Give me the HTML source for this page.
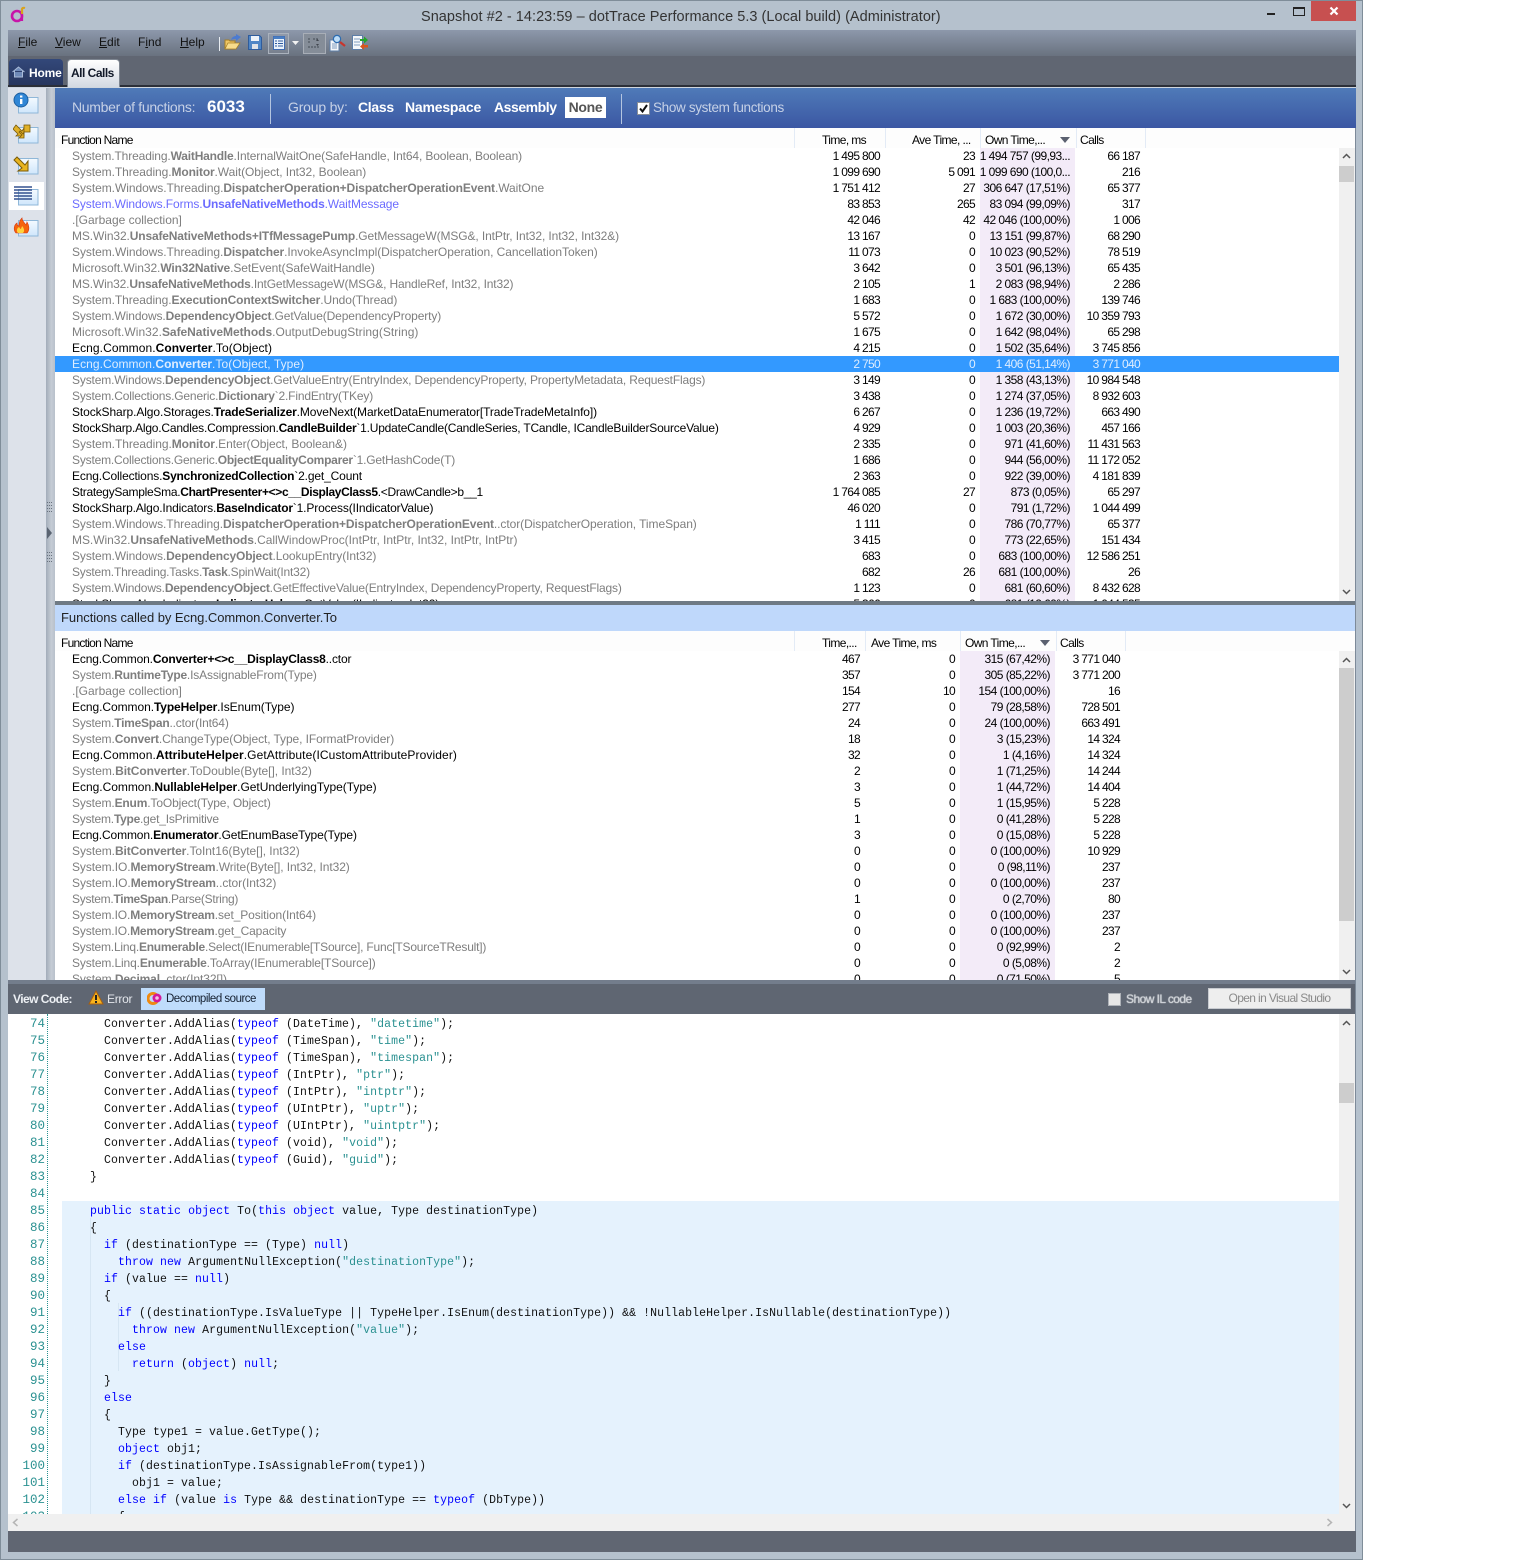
<!DOCTYPE html>
<html lang="en"><head><meta charset="utf-8"><title>dotTrace</title>
<style>
html,body{margin:0;padding:0;background:#fff}
body{position:relative;width:1536px;height:1560px;overflow:hidden;font-family:"Liberation Sans",sans-serif;font-size:12px;color:#000}
.x{position:absolute}
.win{left:0;top:0;width:1363px;height:1560px;background:#b5c1cd;box-sizing:border-box;border:1px solid #7f8d99}
.panel{position:absolute;left:55px;width:1284px;overflow:hidden;background:#fff}
.stripe{position:absolute;top:0;bottom:0;background:#f3ebf8}
.r{position:relative;height:16px;line-height:16px;white-space:nowrap;color:#000}
.r a{position:absolute;left:17px;top:0;letter-spacing:calc(-.2px + var(--l,0px))}
.r a b{letter-spacing:calc(-.27px + var(--l,0px))}
.r i{position:absolute;top:0;font-style:normal;text-align:right;letter-spacing:-.67px;color:#000}
.g a{color:#7e7e7e}.h a{color:#6b6bff}
.s{background:#3399ff}
.r.s a,.r.s i{color:#deedff}
.up i:nth-of-type(1){left:725px;width:100px}
.up i:nth-of-type(2){left:820px;width:100px}
.up i:nth-of-type(3){left:915px;width:100px;letter-spacing:-.55px}
.up i:nth-of-type(4){left:985px;width:100px}
.lo i:nth-of-type(1){left:705px;width:100px}
.lo i:nth-of-type(2){left:800px;width:100px}
.lo i:nth-of-type(3){left:895px;width:100px;letter-spacing:-.55px}
.lo i:nth-of-type(4){left:965px;width:100px}
.up .el{left:916px;letter-spacing:-.54px}
.hd{position:absolute;left:55px;width:1300px;height:20px;background:#fdfdfd;line-height:24px;font-size:12px;letter-spacing:-.6px;white-space:nowrap}
.hd span{position:absolute;top:0}
.hd u{position:absolute;top:0;width:1px;height:20px;background:#e3ebf6}
.sb{position:absolute;left:1339px;width:16px;background:#f0f0f0}
.sb em{position:absolute;left:0;width:15px;background:#cdcdcd}
.sb svg{position:absolute;left:3px}
.m{position:absolute;top:35px;line-height:14px;color:#111;font-size:12px}
.m u{text-decoration:underline}
pre{margin:0;font-family:"Liberation Mono",monospace;font-size:11.5px;letter-spacing:.1px;line-height:17px;color:#111}
.k{color:#0000ff}.t{color:#2b9191}
</style></head><body>
<div class="x win"></div>

<!-- logo + title -->
<svg class="x" style="left:10px;top:6px" width="17" height="17" viewBox="0 0 17 17"><circle cx="7" cy="10" r="5" fill="none" stroke="#c715a8" stroke-width="2.6"/><path d="M12 15V7" stroke="#c715a8" stroke-width="2.2"/><path d="M12 8V3.500c0-1.500 1.500-2 3-1.500" fill="none" stroke="#d9a21c" stroke-width="2.200"/></svg>
<div class="x" style="left:421px;top:8px;width:530px;font-size:14.500px;line-height:18px;color:#333;white-space:nowrap;letter-spacing:.035px">Snapshot #2 - 14:23:59 – dotTrace Performance 5.3 (Local build) (Administrator)</div>
<div class="x" style="left:1267px;top:13px;width:8px;height:2px;background:#222"></div>
<div class="x" style="left:1293px;top:7px;width:10px;box-sizing:content-box;border:1px solid #222;border-top-width:2px;height:6px"></div>
<div class="x" style="left:1311px;top:1px;width:45px;height:20px;background:#c75050"></div>
<svg class="x" style="left:1329px;top:6px" width="10" height="10" viewBox="0 0 10 10"><path d="M1.500 1.500L8.500 8.500M8.500 1.500L1.500 8.500" stroke="#fff" stroke-width="2.200"/></svg>

<!-- client frame -->
<div class="x" style="left:8px;top:30px;width:1348px;height:26px;background:linear-gradient(#8d98ab,#69727f)"></div>
<div class="x" style="left:8px;top:56px;width:1348px;height:29px;background:#606672"></div>
<div class="x" style="left:8px;top:85px;width:1348px;height:3px;background:linear-gradient(#2b2f38,#2b2f38 2px,#cfd6df 2px)"></div>

<div class="m" style="left:18px"><u>F</u>ile</div>
<div class="m" style="left:55px"><u>V</u>iew</div>
<div class="m" style="left:99px"><u>E</u>dit</div>
<div class="m" style="left:138px">F<u>i</u>nd</div>
<div class="m" style="left:180px"><u>H</u>elp</div>
<div class="x" style="left:219px;top:37px;width:1px;height:14px;background:#e9edf2"></div>

<!-- toolbar icons -->
<svg class="x" style="left:224px;top:34px" width="17" height="17" viewBox="0 0 17 17"><path d="M1 15V6h4l1 1h5v8z" fill="#eec664" stroke="#a67f26"/><path d="M1 15l3-6h12l-4 6z" fill="#f7dc8c" stroke="#a67f26" stroke-width=".7"/><path d="M7 6c1-3 3-4 5-4V0l5 3-5 4V5c-2 0-3 0-5 1z" fill="#4c7bd0"/></svg>
<svg class="x" style="left:248px;top:35px" width="14" height="15" viewBox="0 0 14 15"><path d="M.5 .5h11l2 2v12H.5z" fill="#4f86c6" stroke="#2f5c9c"/><rect x="3" y="1" width="8" height="5" fill="#eef3f9"/><rect x="4" y="9" width="6" height="5" fill="#dfe3e8"/></svg>
<div class="x" style="left:268px;top:33px;width:19px;height:19px;border:1px solid #aab2bd;background:rgba(255,255,255,.08)"></div>
<svg class="x" style="left:273px;top:36px" width="12" height="14" viewBox="0 0 12 14"><rect x=".5" y=".5" width="11" height="13" fill="#eaf2fb" stroke="#3e6ab0"/><rect x=".5" y=".5" width="11" height="2.500" fill="#4a7fc4"/><path d="M2 5h2M2 7.500h2M2 10h2M5 5h5M5 7.500h5M5 10h5" stroke="#2d5a9f"/></svg>
<svg class="x" style="left:292px;top:41px" width="7" height="4"><path d="M0 0h7L3.500 4z" fill="#f2f2f2"/></svg>
<div class="x" style="left:303px;top:33px;width:21px;height:19px;border:1px solid #a8aeb7;background:#858d98"></div>
<svg class="x" style="left:306px;top:36px" width="16" height="14" viewBox="0 0 16 14"><path d="M2 3h3M7 3h6M2 6h3M2 11h12" stroke="#5a616b" stroke-width="1.500" stroke-dasharray="2 1"/><path d="M10 5h3l-1.500-2zM10 8h3l-1.500 2z" fill="#41464e"/></svg>
<svg class="x" style="left:329px;top:34px" width="17" height="18" viewBox="0 0 17 18"><path d="M1 6h9v11H1z" fill="#f4f6f9" stroke="#5d7ea8"/><path d="M3 10h5M3 12h5M3 14h5" stroke="#7e9cc0"/><circle cx="8" cy="5" r="3.600" fill="#bcdcf7" stroke="#2c6cb0" stroke-width="1.200"/><path d="M11 8l5 4" stroke="#c8342c" stroke-width="2.200"/></svg>
<svg class="x" style="left:352px;top:35px" width="17" height="17" viewBox="0 0 17 17"><rect x=".5" y=".5" width="10" height="14" fill="#f5f7fa" stroke="#5d7ea8"/><path d="M2 4h6M2 7h6M2 10h6" stroke="#7e9cc0"/><path d="M8 4h4V1.500L16 5l-4 3.500V6H8z" fill="#23a52b"/><path d="M16 10h-4V8l-4 3.500 4 3.500v-2.500h4z" fill="#d9561c"/></svg>

<!-- tabs -->
<div class="x" style="left:9px;top:59px;width:54px;height:26px;background:linear-gradient(#33487a,#27365e);border-radius:4px 4px 0 0"></div>
<svg class="x" style="left:12px;top:66px" width="13" height="12" viewBox="0 0 13 12"><path d="M.5 6l6-5 6 5M2.500 5v6h8V5" fill="#6f8ab8" stroke="#a9bbd8"/></svg>
<div class="x" style="left:29px;top:66px;font-weight:bold;color:#fff;font-size:12px;line-height:14px;letter-spacing:-.2px">Home</div>
<div class="x" style="left:67px;top:59px;width:53px;height:28px;background:linear-gradient(#fff,#d3d9e2);border-radius:4px 4px 0 0;border:1px solid #7e8691;border-bottom:0;box-sizing:border-box"></div>
<div class="x" style="left:71px;top:66px;font-weight:bold;color:#101828;font-size:12px;line-height:14px;letter-spacing:-.5px;white-space:nowrap">All Calls</div>

<!-- sidebar -->
<div class="x" style="left:8px;top:88px;width:38px;height:892px;background:#dde2ea"></div>
<div class="x" style="left:46px;top:88px;width:9px;height:892px;background:linear-gradient(90deg,#a2acb9,#c5ccd5 60%,#b8c0cb)"></div>
<div class="x" style="left:9px;top:182px;width:35px;height:28px;background:#fff"></div>
<svg class="x" style="left:13px;top:92px" width="28" height="150" viewBox="0 0 28 150">
<defs><linearGradient id="wg" x1="0" y1="0" x2="0" y2="1"><stop offset="0" stop-color="#f4faff"/><stop offset="1" stop-color="#cfe6fb"/></linearGradient></defs>
<g fill="url(#wg)" stroke="#8fb7d8"><rect x="5.500" y="5.500" width="19.500" height="15.500"/><rect x="5.500" y="35.500" width="19.500" height="15.500"/><rect x="5.500" y="66.500" width="19.500" height="15.500"/><rect x="5.500" y="97.500" width="19.500" height="15.500"/><rect x="5.500" y="128.500" width="19.500" height="15.500"/></g>
<circle cx="8" cy="8" r="7" fill="#2f86d6" stroke="#1d5f9f"/><rect x="7" y="7" width="2.400" height="5" fill="#fff"/><rect x="7" y="3.500" width="2.400" height="2" fill="#fff"/>
<g fill="#e0b028" stroke="#7a5a08" stroke-width=".8"><path transform="translate(0,33)" d="M3 0l6 6 2-3v8H3l2-2-5-5z"/><rect x="11" y="33" width="6" height="7"/><path transform="translate(6,39)" d="M0 1l1-1 3 3 1-2v6H0l1-1 2-2z"/></g>
<path d="M4 65L12 73L15 69V79H5L9 76L1 68z" fill="#e8b41f" stroke="#7a5a08"/>
<path d="M1 95h18M1 98h18M1 101h18M1 104h18M1 107h18" stroke="#33518f" stroke-width="1.500"/>
<path d="M3 141c-3-3-2-8 1-10 0 2 1 3 2 3 0-4 1-6 3-8 0 3 2 4 4 7 0-1 1-2 1-3 2 3 3 8 0 11z" fill="#f5640c" stroke="#d8360a" stroke-width=".6"/><path d="M5 141c-2-2-1-5 1-6 1 1 1 2 2 2 0-1 1-2 1-3 2 2 3 5 1 7z" fill="#ffd23c"/>
</svg>
<svg class="x" style="left:46px;top:500px" width="9" height="70" viewBox="0 0 9 70">
<g fill="#68717d"><rect x="1" y="2" width="1" height="1"/><rect x="3" y="2" width="1" height="1"/><rect x="5" y="2" width="1" height="1"/><rect x="1" y="5" width="1" height="1"/><rect x="3" y="5" width="1" height="1"/><rect x="5" y="5" width="1" height="1"/><rect x="1" y="8" width="1" height="1"/><rect x="3" y="8" width="1" height="1"/><rect x="5" y="8" width="1" height="1"/><rect x="1" y="11" width="1" height="1"/><rect x="3" y="11" width="1" height="1"/><rect x="5" y="11" width="1" height="1"/><rect x="1" y="52" width="1" height="1"/><rect x="3" y="52" width="1" height="1"/><rect x="5" y="52" width="1" height="1"/><rect x="1" y="55" width="1" height="1"/><rect x="3" y="55" width="1" height="1"/><rect x="5" y="55" width="1" height="1"/><rect x="1" y="58" width="1" height="1"/><rect x="3" y="58" width="1" height="1"/><rect x="5" y="58" width="1" height="1"/><rect x="1" y="61" width="1" height="1"/><rect x="3" y="61" width="1" height="1"/><rect x="5" y="61" width="1" height="1"/></g>
<path d="M1 27l5 6-5 6z" fill="#5a6472"/></svg>

<!-- blue filter header -->
<div class="x" style="left:55px;top:88px;width:1301px;height:40px;background:linear-gradient(#4f7ab8,#3b57a3)"></div>
<div class="x" style="left:72px;top:99px;color:#c6d1e6;font-size:14px;line-height:17px;white-space:nowrap;letter-spacing:-.3px">Number of functions:</div>
<div class="x" style="left:207px;top:97px;color:#fff;font-size:17px;font-weight:bold;line-height:20px">6033</div>
<div class="x" style="left:270px;top:94px;width:1px;height:30px;background:#b4c5e0"></div>
<div class="x" style="left:288px;top:99px;color:#c6d1e6;font-size:14px;line-height:17px;letter-spacing:-.2px">Group by:</div>
<div class="x" style="left:358px;top:99px;color:#fff;font-size:14px;font-weight:bold;line-height:17px;letter-spacing:-.3px">Class</div>
<div class="x" style="left:405px;top:99px;color:#fff;font-size:14px;font-weight:bold;line-height:17px;letter-spacing:-.2px">Namespace</div>
<div class="x" style="left:494px;top:99px;color:#fff;font-size:14px;font-weight:bold;line-height:17px;letter-spacing:-.45px">Assembly</div>
<div class="x" style="left:565px;top:97px;width:41px;height:21px;background:#fff;color:#555;font-size:14px;font-weight:bold;line-height:21px;text-align:center;letter-spacing:-.3px">None</div>
<div class="x" style="left:621px;top:94px;width:1px;height:30px;background:#b4c5e0"></div>
<div class="x" style="left:637px;top:102px;width:11px;height:11px;background:#fff;border:1px solid #8a8f96"></div>
<svg class="x" style="left:638px;top:103px" width="11" height="11" viewBox="0 0 11 11"><path d="M2 5.500l2.500 3L9 2" fill="none" stroke="#111" stroke-width="2"/></svg>
<div class="x" style="left:653px;top:99px;color:#c6d1e6;font-size:13.500px;line-height:17px;white-space:nowrap;letter-spacing:-.34px">Show system functions</div>

<!-- upper table -->
<div class="hd" style="top:128px"><span style="left:6px;letter-spacing:-.75px">Function Name</span><u style="left:739px"></u><span style="left:767px">Time, ms</span><u style="left:830px"></u><span style="left:857px">Ave Time, ...</span><u style="left:925px"></u><span style="left:930px">Own Time,...</span><svg style="position:absolute;left:1005px;top:9px" width="10" height="6"><path d="M0 0h10L5 6z" fill="#5b6170"/></svg><u style="left:1021px"></u><span style="left:1025px">Calls</span><u style="left:1090px"></u></div>
<div class="panel up" style="top:148px;height:453px">
<div class="stripe" style="left:925px;width:95px"></div>
<div class="r g"><a style="--l:.075px">System.Threading.<b>WaitHandle</b>.InternalWaitOne(SafeHandle, Int64, Boolean, Boolean)</a><i>1 495 800</i><i>23</i><i class="el">1 494 757 (99,93...</i><i>66 187</i></div>
<div class="r g"><a style="--l:.13px">System.Threading.<b>Monitor</b>.Wait(Object, Int32, Boolean)</a><i>1 099 690</i><i>5 091</i><i class="el">1 099 690 (100,0...</i><i>216</i></div>
<div class="r g"><a style="--l:.145px">System.Windows.Threading.<b>DispatcherOperation+DispatcherOperationEvent</b>.WaitOne</a><i>1 751 412</i><i>27</i><i>306 647 (17,51%)</i><i>65 377</i></div>
<div class="r h"><a style="--l:.096px">System.Windows.Forms.<b>UnsafeNativeMethods</b>.WaitMessage</a><i>83 853</i><i>265</i><i>83 094 (99,09%)</i><i>317</i></div>
<div class="r g"><a style="--l:.19px">.[Garbage collection]</a><i>42 046</i><i>42</i><i>42 046 (100,00%)</i><i>1 006</i></div>
<div class="r g"><a style="--l:.1px">MS.Win32.<b>UnsafeNativeMethods+ITfMessagePump</b>.GetMessageW(MSG&amp;, IntPtr, Int32, Int32, Int32&amp;)</a><i>13 167</i><i>0</i><i>13 151 (99,87%)</i><i>68 290</i></div>
<div class="r g"><a style="--l:.143px">System.Windows.Threading.<b>Dispatcher</b>.InvokeAsyncImpl(DispatcherOperation, CancellationToken)</a><i>11 073</i><i>0</i><i>10 023 (90,52%)</i><i>78 519</i></div>
<div class="r g"><a style="--l:.135px">Microsoft.Win32.<b>Win32Native</b>.SetEvent(SafeWaitHandle)</a><i>3 642</i><i>0</i><i>3 501 (96,13%)</i><i>65 435</i></div>
<div class="r g"><a style="--l:.054px">MS.Win32.<b>UnsafeNativeMethods</b>.IntGetMessageW(MSG&amp;, HandleRef, Int32, Int32)</a><i>2 105</i><i>1</i><i>2 083 (98,94%)</i><i>2 286</i></div>
<div class="r g"><a style="--l:.13px">System.Threading.<b>ExecutionContextSwitcher</b>.Undo(Thread)</a><i>1 683</i><i>0</i><i>1 683 (100,00%)</i><i>139 746</i></div>
<div class="r g"><a style="--l:.083px">System.Windows.<b>DependencyObject</b>.GetValue(DependencyProperty)</a><i>5 572</i><i>0</i><i>1 672 (30,00%)</i><i>10 359 793</i></div>
<div class="r g"><a style="--l:.237px">Microsoft.Win32.<b>SafeNativeMethods</b>.OutputDebugString(String)</a><i>1 675</i><i>0</i><i>1 642 (98,04%)</i><i>65 298</i></div>
<div class="r"><a style="--l:.28px">Ecng.Common.<b>Converter</b>.To(Object)</a><i>4 215</i><i>0</i><i>1 502 (35,64%)</i><i>3 745 856</i></div>
<div class="r s"><a style="--l:.26px">Ecng.Common.<b>Converter</b>.To(Object, Type)</a><i>2 750</i><i>0</i><i>1 406 (51,14%)</i><i>3 771 040</i></div>
<div class="r g"><a style="--l:.046px">System.Windows.<b>DependencyObject</b>.GetValueEntry(EntryIndex, DependencyProperty, PropertyMetadata, RequestFlags)</a><i>3 149</i><i>0</i><i>1 358 (43,13%)</i><i>10 984 548</i></div>
<div class="r g"><a style="--l:.036px">System.Collections.Generic.<b>Dictionary</b>`2.FindEntry(TKey)</a><i>3 438</i><i>0</i><i>1 274 (37,05%)</i><i>8 932 603</i></div>
<div class="r"><a style="--l:.105px">StockSharp.Algo.Storages.<b>TradeSerializer</b>.MoveNext(MarketDataEnumerator[TradeTradeMetaInfo])</a><i>6 267</i><i>0</i><i>1 236 (19,72%)</i><i>663 490</i></div>
<div class="r"><a style="--l:-.008px">StockSharp.Algo.Candles.Compression.<b>CandleBuilder</b>`1.UpdateCandle(CandleSeries, TCandle, ICandleBuilderSourceValue)</a><i>4 929</i><i>0</i><i>1 003 (20,36%)</i><i>457 166</i></div>
<div class="r g"><a style="--l:.143px">System.Threading.<b>Monitor</b>.Enter(Object, Boolean&amp;)</a><i>2 335</i><i>0</i><i>971 (41,60%)</i><i>11 431 563</i></div>
<div class="r g"><a style="--l:.015px">System.Collections.Generic.<b>ObjectEqualityComparer</b>`1.GetHashCode(T)</a><i>1 686</i><i>0</i><i>944 (56,00%)</i><i>11 172 052</i></div>
<div class="r"><a style="--l:.057px">Ecng.Collections.<b>SynchronizedCollection</b>`2.get_Count</a><i>2 363</i><i>0</i><i>922 (39,00%)</i><i>4 181 839</i></div>
<div class="r"><a style="--l:-.085px">StrategySampleSma.<b>ChartPresenter+&lt;&gt;c__DisplayClass5</b>.&lt;DrawCandle&gt;b__1</a><i>1 764 085</i><i>27</i><i>873 (0,05%)</i><i>65 297</i></div>
<div class="r"><a style="--l:.056px">StockSharp.Algo.Indicators.<b>BaseIndicator</b>`1.Process(IIndicatorValue)</a><i>46 020</i><i>0</i><i>791 (1,72%)</i><i>1 044 499</i></div>
<div class="r g"><a style="--l:.13px">System.Windows.Threading.<b>DispatcherOperation+DispatcherOperationEvent</b>..ctor(DispatcherOperation, TimeSpan)</a><i>1 111</i><i>0</i><i>786 (70,77%)</i><i>65 377</i></div>
<div class="r g"><a style="--l:.167px">MS.Win32.<b>UnsafeNativeMethods</b>.CallWindowProc(IntPtr, IntPtr, Int32, IntPtr, IntPtr)</a><i>3 415</i><i>0</i><i>773 (22,65%)</i><i>151 434</i></div>
<div class="r g"><a style="--l:.12px">System.Windows.<b>DependencyObject</b>.LookupEntry(Int32)</a><i>683</i><i>0</i><i>683 (100,00%)</i><i>12 586 251</i></div>
<div class="r g"><a>System.Threading.Tasks.<b>Task</b>.SpinWait(Int32)</a><i>682</i><i>26</i><i>681 (100,00%)</i><i>26</i></div>
<div class="r g"><a style="--l:.03px">System.Windows.<b>DependencyObject</b>.GetEffectiveValue(EntryIndex, DependencyProperty, RequestFlags)</a><i>1 123</i><i>0</i><i>681 (60,60%)</i><i>8 432 628</i></div>
<div class="r"><a style="--l:.05px">StockSharp.Algo.Indicators.<b>IndicatorHelper</b>.GetValue(IIndicator, Int32)</a><i>5 366</i><i>0</i><i>681 (12,69%)</i><i>1 044 535</i></div>
</div>
<div class="sb" style="top:148px;height:453px"><em style="top:18px;height:16px"></em><svg style="top:5px" width="9" height="6"><path d="M1 5l3.500-3.500L8 5" fill="none" stroke="#555" stroke-width="1.500"/></svg><svg style="top:441px" width="9" height="6"><path d="M1 1l3.500 3.500L8 1" fill="none" stroke="#555" stroke-width="1.500"/></svg></div>

<!-- divider + title band -->
<div class="x" style="left:55px;top:601px;width:1301px;height:4px;background:#6f7a84"></div>
<div class="x" style="left:55px;top:605px;width:1300px;height:26px;background:#bfd8fb"></div>
<div class="x" style="left:61px;top:610px;font-size:13px;line-height:16px;color:#222;white-space:nowrap;letter-spacing:-.05px">Functions called by Ecng.Common.Converter.To</div>

<!-- lower table -->
<div class="hd" style="top:631px"><span style="left:6px;letter-spacing:-.75px">Function Name</span><u style="left:739px"></u><span style="left:767px">Time,...</span><u style="left:810px"></u><span style="left:816px">Ave Time, ms</span><u style="left:905px"></u><span style="left:910px">Own Time,...</span><svg style="position:absolute;left:985px;top:9px" width="10" height="6"><path d="M0 0h10L5 6z" fill="#5b6170"/></svg><u style="left:1001px"></u><span style="left:1005px">Calls</span><u style="left:1070px"></u></div>
<div class="panel lo" style="top:651px;height:329px">
<div class="stripe" style="left:905px;width:95px"></div>
<div class="r"><a style="--l:.043px">Ecng.Common.<b>Converter+&lt;&gt;c__DisplayClass8</b>..ctor</a><i>467</i><i>0</i><i>315 (67,42%)</i><i>3 771 040</i></div>
<div class="r g"><a style="--l:.045px">System.<b>RuntimeType</b>.IsAssignableFrom(Type)</a><i>357</i><i>0</i><i>305 (85,22%)</i><i>3 771 200</i></div>
<div class="r g"><a style="--l:.19px">.[Garbage collection]</a><i>154</i><i>10</i><i>154 (100,00%)</i><i>16</i></div>
<div class="r"><a style="--l:.14px">Ecng.Common.<b>TypeHelper</b>.IsEnum(Type)</a><i>277</i><i>0</i><i>79 (28,58%)</i><i>728 501</i></div>
<div class="r g"><a style="--l:.035px">System.<b>TimeSpan</b>..ctor(Int64)</a><i>24</i><i>0</i><i>24 (100,00%)</i><i>663 491</i></div>
<div class="r g"><a style="--l:.105px">System.<b>Convert</b>.ChangeType(Object, Type, IFormatProvider)</a><i>18</i><i>0</i><i>3 (15,23%)</i><i>14 324</i></div>
<div class="r"><a style="--l:.3px">Ecng.Common.<b>AttributeHelper</b>.GetAttribute(ICustomAttributeProvider)</a><i>32</i><i>0</i><i>1 (4,16%)</i><i>14 324</i></div>
<div class="r g"><a style="--l:.167px">System.<b>BitConverter</b>.ToDouble(Byte[], Int32)</a><i>2</i><i>0</i><i>1 (71,25%)</i><i>14 244</i></div>
<div class="r"><a style="--l:.176px">Ecng.Common.<b>NullableHelper</b>.GetUnderlyingType(Type)</a><i>3</i><i>0</i><i>1 (44,72%)</i><i>14 404</i></div>
<div class="r g"><a style="--l:.09px">System.<b>Enum</b>.ToObject(Type, Object)</a><i>5</i><i>0</i><i>1 (15,95%)</i><i>5 228</i></div>
<div class="r g"><a>System.<b>Type</b>.get_IsPrimitive</a><i>1</i><i>0</i><i>0 (41,28%)</i><i>5 228</i></div>
<div class="r"><a style="--l:.065px">Ecng.Common.<b>Enumerator</b>.GetEnumBaseType(Type)</a><i>3</i><i>0</i><i>0 (15,08%)</i><i>5 228</i></div>
<div class="r g"><a style="--l:.146px">System.<b>BitConverter</b>.ToInt16(Byte[], Int32)</a><i>0</i><i>0</i><i>0 (100,00%)</i><i>10 929</i></div>
<div class="r g"><a style="--l:.12px">System.IO.<b>MemoryStream</b>.Write(Byte[], Int32, Int32)</a><i>0</i><i>0</i><i>0 (98,11%)</i><i>237</i></div>
<div class="r g"><a style="--l:.135px">System.IO.<b>MemoryStream</b>..ctor(Int32)</a><i>0</i><i>0</i><i>0 (100,00%)</i><i>237</i></div>
<div class="r g"><a style="--l:-.07px">System.<b>TimeSpan</b>.Parse(String)</a><i>1</i><i>0</i><i>0 (2,70%)</i><i>80</i></div>
<div class="r g"><a style="--l:.09px">System.IO.<b>MemoryStream</b>.set_Position(Int64)</a><i>0</i><i>0</i><i>0 (100,00%)</i><i>237</i></div>
<div class="r g"><a style="--l:.077px">System.IO.<b>MemoryStream</b>.get_Capacity</a><i>0</i><i>0</i><i>0 (100,00%)</i><i>237</i></div>
<div class="r g"><a>System.Linq.<b>Enumerable</b>.Select(IEnumerable[TSource], Func[TSourceTResult])</a><i>0</i><i>0</i><i>0 (92,99%)</i><i>2</i></div>
<div class="r g"><a style="--l:.075px">System.Linq.<b>Enumerable</b>.ToArray(IEnumerable[TSource])</a><i>0</i><i>0</i><i>0 (5,08%)</i><i>2</i></div>
<div class="r g"><a style="--l:.13px">System.<b>Decimal</b>..ctor(Int32[])</a><i>0</i><i>0</i><i>0 (71,50%)</i><i>5</i></div>
</div>
<div class="sb" style="top:651px;height:329px"><em style="top:17px;height:253px"></em><svg style="top:6px" width="9" height="6"><path d="M1 5l3.500-3.500L8 5" fill="none" stroke="#555" stroke-width="1.500"/></svg><svg style="top:318px" width="9" height="6"><path d="M1 1l3.500 3.500L8 1" fill="none" stroke="#555" stroke-width="1.500"/></svg></div>

<!-- view code bar -->
<div class="x" style="left:8px;top:980px;width:1348px;height:4px;background:#737d8c"></div>
<div class="x" style="left:8px;top:984px;width:1348px;height:30px;background:#5f6672"></div>
<div class="x" style="left:13px;top:992px;font-weight:bold;color:#edf0f4;line-height:14px;font-size:12px;letter-spacing:-.55px;white-space:nowrap">View Code:</div>
<svg class="x" style="left:88px;top:990px" width="16" height="15" viewBox="0 0 16 15"><path d="M8 1l7 13H1z" fill="#f7b21c" stroke="#a65f10"/><rect x="7" y="5" width="2" height="5" fill="#222"/><rect x="7" y="11" width="2" height="2" fill="#222"/></svg>
<div class="x" style="left:107px;top:992px;color:#e4e7ec;line-height:14px;font-size:12px;letter-spacing:-.3px">Error</div>
<div class="x" style="left:141px;top:988px;width:124px;height:22px;background:#bfdcfb"></div>
<svg class="x" style="left:147px;top:991px" width="16" height="15" viewBox="0 0 16 15"><circle cx="6" cy="7.500" r="5" fill="none" stroke="#ee8a12" stroke-width="3"/><circle cx="10" cy="7" r="4.500" fill="#d4189a"/><circle cx="10" cy="7" r="1.800" fill="#f2c2e2"/></svg>
<div class="x" style="left:166px;top:992px;color:#152030;line-height:14px;font-size:11.500px;white-space:nowrap;letter-spacing:-.5px">Decompiled source</div>
<div class="x" style="left:1108px;top:993px;width:11px;height:11px;background:#e6e6e6;border:1px solid #aeb2b8"></div>
<div class="x" style="left:1126px;top:992px;color:#cfd3d8;line-height:14px;font-size:12px;white-space:nowrap;letter-spacing:-.55px;text-shadow:0 0 1px #fff">Show IL code</div>
<div class="x" style="left:1208px;top:988px;width:141px;height:19px;background:#eeeeee;border:1px solid #c8cbd0;color:#8a8a8a;text-align:center;line-height:19px;font-size:12px;letter-spacing:-.63px;white-space:nowrap">Open in Visual Studio</div>

<!-- code area -->
<div class="x" style="left:8px;top:1014px;width:1331px;height:500px;background:#fff;overflow:hidden">
<div class="x" style="left:54px;top:187px;width:1277px;height:313px;background:#e5f2fd"></div>
<div class="x" style="left:39px;top:0;width:1px;height:500px;border-left:1px dotted #2b9191"></div>
<div class="x" style="left:82px;top:204px;width:1px;height:296px;background:#d6e6f3"></div>
<div class="x" style="left:110px;top:289px;width:1px;height:68px;background:#d6e6f3"></div>
<pre class="x" style="left:0;top:2px;width:37px;text-align:right;color:#2b9191;font-size:12.500px;letter-spacing:0">74
75
76
77
78
79
80
81
82
83
84
85
86
87
88
89
90
91
92
93
94
95
96
97
98
99
100
101
102
103</pre>
<pre class="x" style="left:54px;top:2px">      Converter.AddAlias(<span class="k">typeof</span> (DateTime), <span class="t">"datetime"</span>);
      Converter.AddAlias(<span class="k">typeof</span> (TimeSpan), <span class="t">"time"</span>);
      Converter.AddAlias(<span class="k">typeof</span> (TimeSpan), <span class="t">"timespan"</span>);
      Converter.AddAlias(<span class="k">typeof</span> (IntPtr), <span class="t">"ptr"</span>);
      Converter.AddAlias(<span class="k">typeof</span> (IntPtr), <span class="t">"intptr"</span>);
      Converter.AddAlias(<span class="k">typeof</span> (UIntPtr), <span class="t">"uptr"</span>);
      Converter.AddAlias(<span class="k">typeof</span> (UIntPtr), <span class="t">"uintptr"</span>);
      Converter.AddAlias(<span class="k">typeof</span> (void), <span class="t">"void"</span>);
      Converter.AddAlias(<span class="k">typeof</span> (Guid), <span class="t">"guid"</span>);
    }

    <span class="k">public</span> <span class="k">static</span> <span class="k">object</span> To(<span class="k">this</span> <span class="k">object</span> value, Type destinationType)
    {
      <span class="k">if</span> (destinationType == (Type) <span class="k">null</span>)
        <span class="k">throw</span> <span class="k">new</span> ArgumentNullException(<span class="t">"destinationType"</span>);
      <span class="k">if</span> (value == <span class="k">null</span>)
      {
        <span class="k">if</span> ((destinationType.IsValueType || TypeHelper.IsEnum(destinationType)) &amp;&amp; !NullableHelper.IsNullable(destinationType))
          <span class="k">throw</span> <span class="k">new</span> ArgumentNullException(<span class="t">"value"</span>);
        <span class="k">else</span>
          <span class="k">return</span> (<span class="k">object</span>) <span class="k">null</span>;
      }
      <span class="k">else</span>
      {
        Type type1 = value.GetType();
        <span class="k">object</span> obj1;
        <span class="k">if</span> (destinationType.IsAssignableFrom(type1))
          obj1 = value;
        <span class="k">else</span> <span class="k">if</span> (value <span class="k">is</span> Type &amp;&amp; destinationType == <span class="k">typeof</span> (DbType))
        {</pre>
</div>
<div class="sb" style="top:1014px;height:500px"><em style="top:69px;height:20px"></em><svg style="top:6px" width="9" height="6"><path d="M1 5l3.500-3.500L8 5" fill="none" stroke="#555" stroke-width="1.500"/></svg><svg style="top:489px" width="9" height="6"><path d="M1 1l3.500 3.500L8 1" fill="none" stroke="#555" stroke-width="1.500"/></svg></div>

<!-- horizontal scrollbar + bottom bar -->
<div class="x" style="left:8px;top:1514px;width:1348px;height:17px;background:#f0f0f0"></div>
<svg class="x" style="left:12px;top:1518px" width="7" height="9"><path d="M5.500 1L1.500 4.500l4 3.500" fill="none" stroke="#b5b5b5" stroke-width="1.500"/></svg>
<svg class="x" style="left:1326px;top:1518px" width="7" height="9"><path d="M1.500 1l4 3.500-4 3.500" fill="none" stroke="#b5b5b5" stroke-width="1.500"/></svg>
<div class="x" style="left:8px;top:1531px;width:1348px;height:21px;background:#606672"></div>
<div class="x" style="left:1355px;top:128px;width:1px;height:1403px;background:#7d8a99"></div>
</body></html>
